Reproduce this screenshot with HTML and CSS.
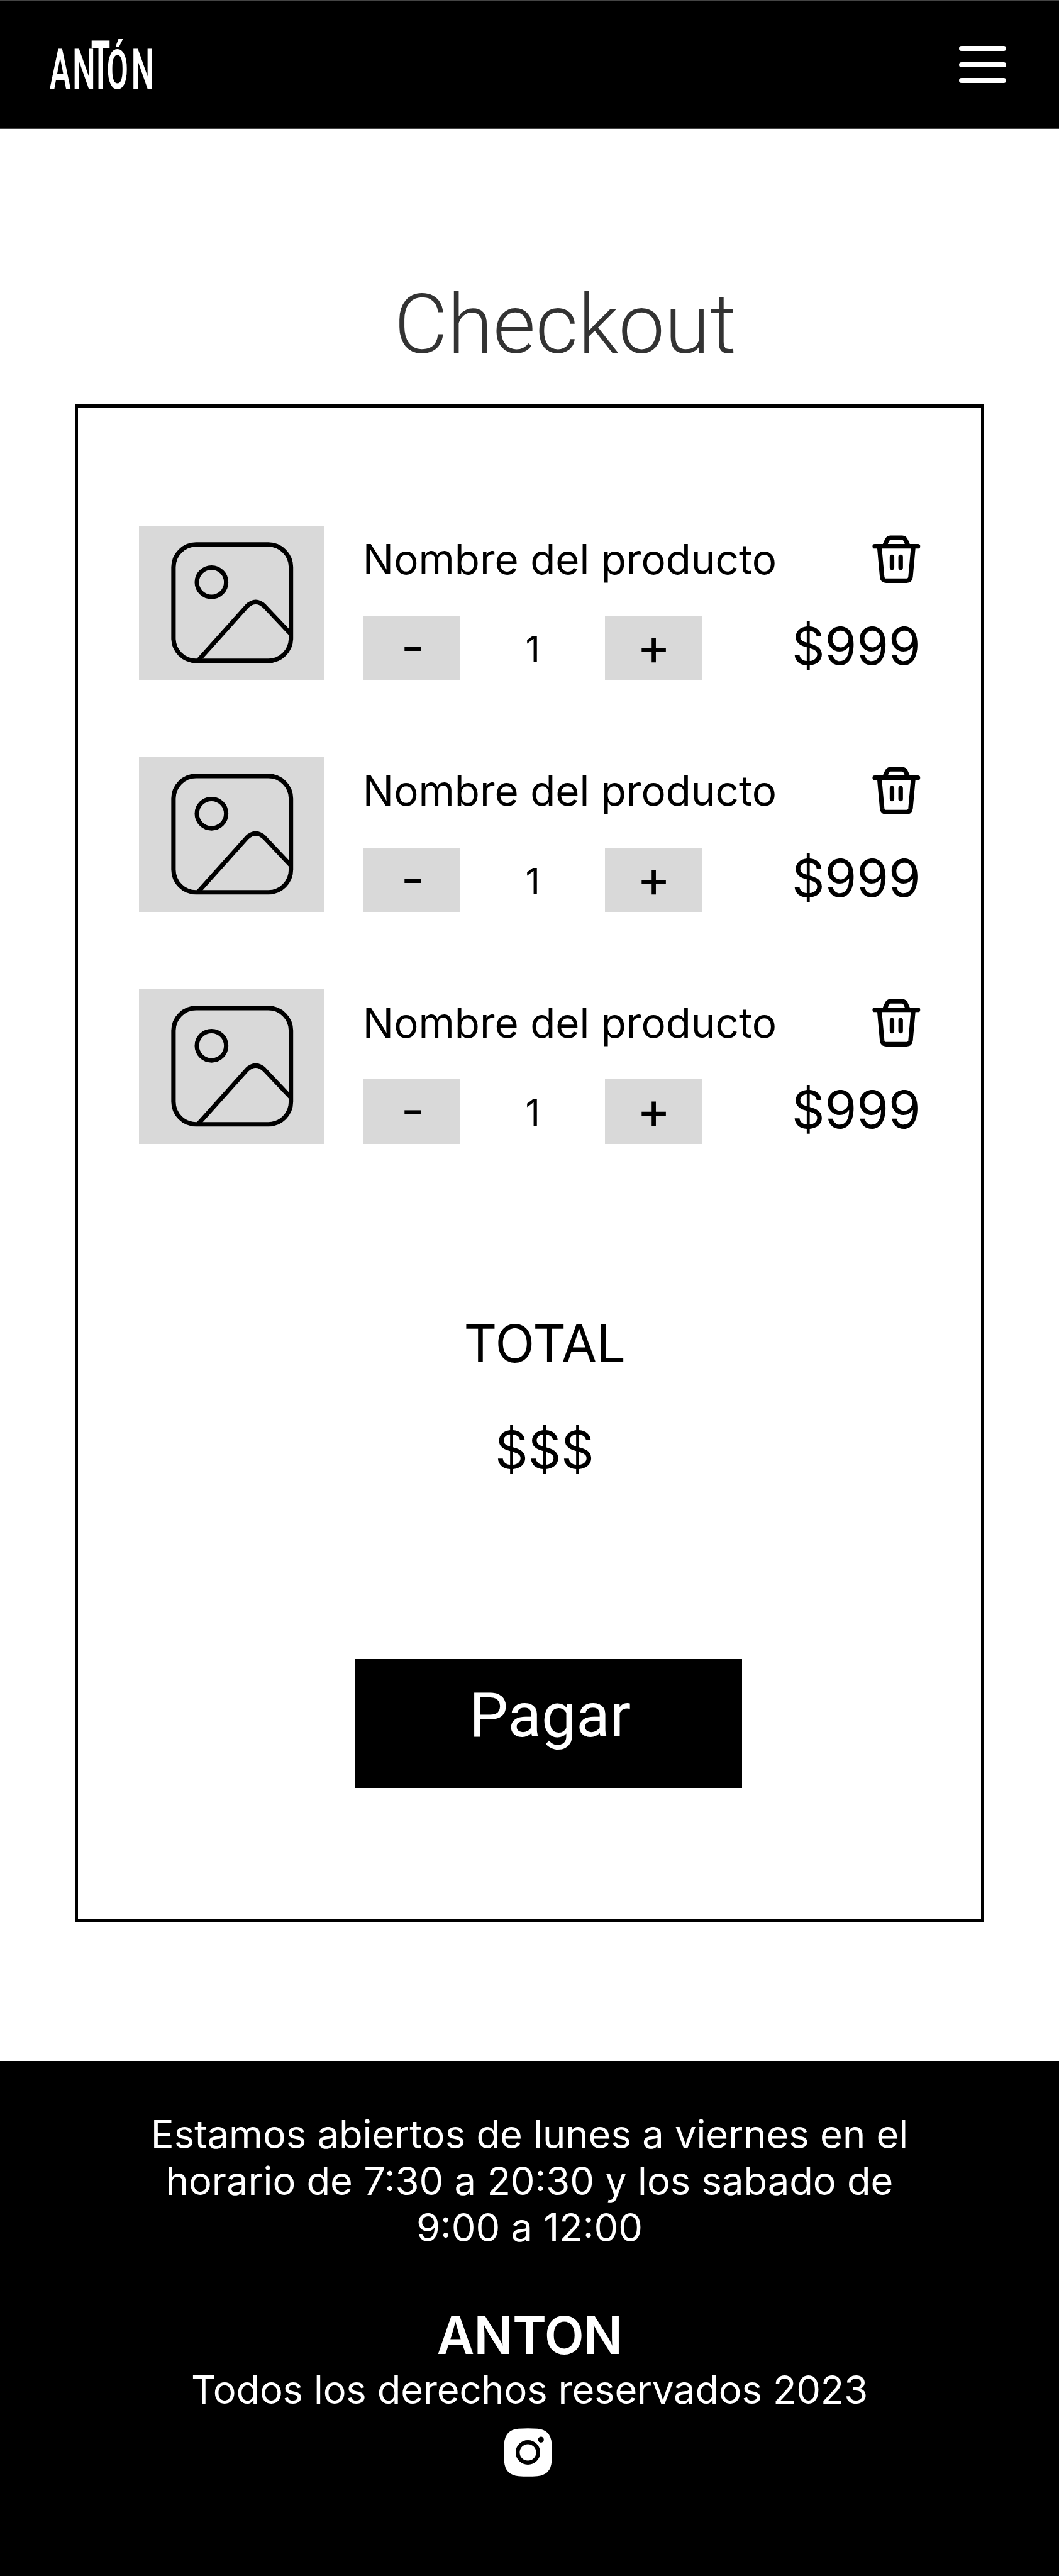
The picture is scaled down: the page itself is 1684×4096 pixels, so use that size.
FILE: index.html
```html
<!DOCTYPE html>
<html lang="es">
<head>
<meta charset="utf-8">
<title>Checkout</title>
<link rel="stylesheet" href="styles.css">
</head>
<body>
<svg class="sprite" aria-hidden="true">
  <symbol id="picture" viewBox="0 0 204 202">
    <g fill="none" stroke="#000" stroke-width="7.2">
      <rect x="7" y="7" width="190" height="188" rx="36.5"/>
      <circle cx="68.5" cy="68" r="23.7"/>
      <path d="M47 194.500L126 106.500Q140 93.500 154 106.500L197 152"/>
    </g>
  </symbol>
  <symbol id="trash" viewBox="0 0 78 78">
    <g fill="none" stroke="#000" stroke-width="7.4" stroke-linecap="round" stroke-linejoin="round">
      <path d="M4.100 18H74M11.500 18L16 67.500Q16.800 73.600 22.500 73.600H55.500Q61.200 73.600 62 67.500L66.500 18M32 35V52.500M46 35V52.500"/>
      <path d="M20 17L23.500 9Q25.500 4.200 29.500 4.200H48.500Q52.500 4.200 54.500 9L58 17"/>
    </g>
  </symbol>
</svg>

<header class="header">
  <svg class="logo" viewBox="0 0 170 84" role="img" aria-label="Antón">
    <text x="0" y="81.500" font-size="91" textLength="34" lengthAdjust="spacingAndGlyphs">A</text>
    <text x="37" y="81.500" font-size="91" textLength="37" lengthAdjust="spacingAndGlyphs">N</text>
    <text x="67" y="81.500" font-size="109" textLength="31" lengthAdjust="spacingAndGlyphs">T</text>
    <text x="92" y="81" font-size="89" textLength="35" lengthAdjust="spacingAndGlyphs">Ó</text>
    <text x="132" y="81.500" font-size="91" textLength="37" lengthAdjust="spacingAndGlyphs">N</text>
  </svg>
  <button class="menu" aria-label="Menú"><i></i><i></i><i></i></button>
</header>

<main class="main">
  <h1 class="title">Checkout</h1>
  <section class="cart">
    <ul class="items">
      <li class="item">
        <div class="thumb"><svg><use href="#picture"/></svg></div>
        <div class="info">
          <div class="line"><span class="name">Nombre del producto</span><svg class="trash"><use href="#trash"/></svg></div>
          <div class="line bottom"><button class="step minus">-</button><span class="qty">1</span><button class="step">+</button><span class="price">$999</span></div>
        </div>
      </li>
      <li class="item">
        <div class="thumb"><svg><use href="#picture"/></svg></div>
        <div class="info">
          <div class="line"><span class="name">Nombre del producto</span><svg class="trash"><use href="#trash"/></svg></div>
          <div class="line bottom"><button class="step minus">-</button><span class="qty">1</span><button class="step">+</button><span class="price">$999</span></div>
        </div>
      </li>
      <li class="item">
        <div class="thumb"><svg><use href="#picture"/></svg></div>
        <div class="info">
          <div class="line"><span class="name">Nombre del producto</span><svg class="trash"><use href="#trash"/></svg></div>
          <div class="line bottom"><button class="step minus">-</button><span class="qty">1</span><button class="step">+</button><span class="price">$999</span></div>
        </div>
      </li>
    </ul>
    <div class="total"><span class="label">TOTAL</span><span>$$$</span></div>
    <button class="pay">Pagar</button>
  </section>
</main>

<footer class="footer">
  <p class="hours">Estamos abiertos de lunes a viernes en el<br>horario de 7:30 a 20:30 y los sabado de<br>9:00 a 12:00</p>
  <p class="brand">ANTON</p>
  <p class="rights">Todos los derechos reservados 2023</p>
  <svg class="instagram" viewBox="0 0 78 78" role="img" aria-label="Instagram">
    <path fill="#fff" d="M24 .8Q39-.4 54 .8Q75.500 2.500 77.200 24Q78.400 39 77.200 54Q75.500 75.500 54 77.200Q39 78.400 24 77.200Q2.500 75.500.8 54Q-.4 39 .8 24Q2.500 2.500 24 .8Z"/>
    <circle cx="39" cy="39" r="16.500" fill="none" stroke="#000" stroke-width="6.500"/>
    <circle cx="60" cy="18.500" r="4.700"/>
  </svg>
</footer>
</body>
</html>
```
FILE: styles.css
```css
/* 1rem is one unit of the 411 x 1000 mobile layout */
html { font-size: 4.096px; }
* { box-sizing: border-box; margin: 0; padding: 0; }
body { width: 100%; height: 1000rem; display: flex; flex-direction: column; background: #fff; color: #000; font-family: Inter, "Liberation Sans", sans-serif; overflow: hidden; }
button { border: 0; background: none; color: inherit; font: inherit; }
.sprite { position: absolute; width: 0; height: 0; }

.header { flex: none; height: 50.1rem; padding: 0 20.4rem 0 19.2rem; display: flex; align-items: center; justify-content: space-between; background: #000; border-top: 1px solid #444; border-bottom: 1px solid #444; }
.logo { width: 40.8rem; height: 20.16rem; overflow: visible; fill: #fff; font-family: Roboto, sans-serif; font-weight: 600; }
.menu { width: 18.4rem; display: flex; flex-direction: column; gap: 4.33rem; }
.menu i { height: 1.92rem; border-radius: 1rem; background: #fff; }

.main { flex: none; height: 749.9rem; padding: 0 29rem; }
.title { padding: 57.4rem 0 0 124rem; height: 106.9rem; font: 300 32rem/37.5rem Roboto, sans-serif; color: #333; white-space: nowrap; }
.cart { width: 353.2rem; height: 589.2rem; padding: 45.8rem 23.7rem 0 23.8rem; display: flex; flex-direction: column; border: 5px solid #000; }
.items { list-style: none; display: flex; flex-direction: column; gap: 30rem; }
.item { display: flex; gap: 15rem; height: 60rem; }
.thumb { flex: none; width: 71.8rem; height: 60rem; display: flex; padding: 5.600rem 0 0 11.600rem; background: #d9d9d9; }
.thumb svg { width: 48.96rem; height: 48.48rem; }
.info { flex: 1; display: flex; flex-direction: column; justify-content: space-between; }
.line { display: flex; justify-content: space-between; }
.name { padding-top: 3.2rem; font-size: 16rem; line-height: 20rem; white-space: nowrap; }
.trash { width: 18.72rem; height: 18.72rem; margin: 3.700rem -.1rem 0 0; flex: none; }
.bottom { height: 25rem; }
.step { width: 38rem; height: 25rem; padding-bottom: .9rem; background: #d9d9d9; font-size: 20rem; line-height: 24rem; text-align: center; }
.minus { padding-left: .9rem; }
.qty { width: 56rem; text-align: center; font-size: 14rem; line-height: 26rem; }
.price { margin: 0 -.1rem 0 auto; font-size: 20rem; line-height: 24rem; }
.total { margin-top: 65.8rem; padding-left: 11.6rem; display: flex; flex-direction: column; align-items: center; gap: 17.2rem; font-size: 20rem; line-height: 24rem; }
.label { letter-spacing: -.1rem; }
.pay { width: 150rem; height: 50rem; margin: 69rem 0 0 84rem; padding: 0 0 6rem 1rem; background: #000; color: #fff; font: 400 24rem/28rem Roboto, sans-serif; }

.footer { flex: none; height: 200rem; padding-top: 19.7rem; display: flex; flex-direction: column; align-items: center; background: #000; color: #fff; text-align: center; white-space: nowrap; }
.hours { font-size: 15rem; line-height: 18rem; }
.brand { margin-top: 21.100rem; font-size: 20rem; line-height: 24rem; font-weight: 600; letter-spacing: -.2rem; }
.rights { margin-top: -.2rem; font-size: 15rem; line-height: 18rem; letter-spacing: -.04rem; }
.instagram { width: 18.8rem; height: 18.8rem; margin: 6rem 1.1rem 0 0; }
```
